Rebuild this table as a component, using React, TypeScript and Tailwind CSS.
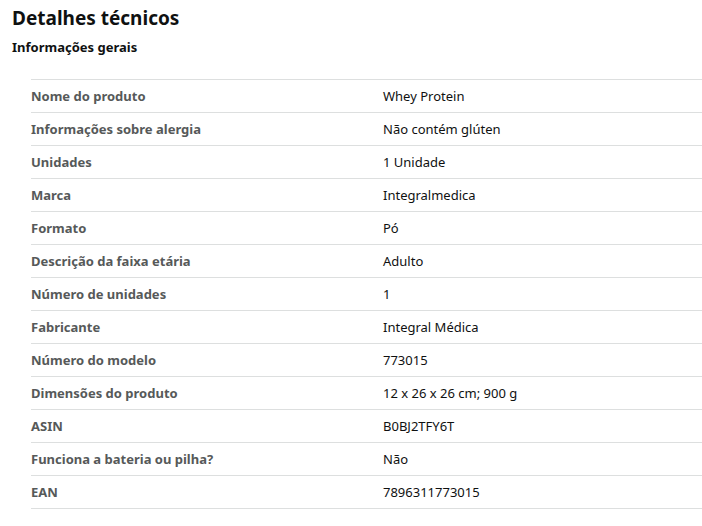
const rows: [string, string][] = [
  ["Nome do produto", "Whey Protein"],
  ["Informações sobre alergia", "Não contém glúten"],
  ["Unidades", "1 Unidade"],
  ["Marca", "Integralmedica"],
  ["Formato", "Pó"],
  ["Descrição da faixa etária", "Adulto"],
  ["Número de unidades", "1"],
  ["Fabricante", "Integral Médica"],
  ["Número do modelo", "773015"],
  ["Dimensões do produto", "12 x 26 x 26 cm; 900 g"],
  ["ASIN", "B0BJ2TFY6T"],
  ["Funciona a bateria ou pilha?", "Não"],
  ["EAN", "7896311773015"],
];

export default function App() {
  return (
    <div className="min-h-[526px] w-[702px] bg-white pl-3 pt-[6px] font-['Noto_Sans',sans-serif] text-[#0f1111]">
      <h2 className="text-[19px] font-bold leading-6">Detalhes técnicos</h2>
      <h3 className="mt-[9px] text-[13px] font-bold leading-4">Informações gerais</h3>
      <div className="ml-[19px] mt-[24px] border-t border-[#dddfdf]">
        {rows.map(([label, value]) => (
          <div key={label} className="flex h-[33px] items-center border-b border-[#dddfdf] pt-px text-[13px]">
            <div className="w-[352px] font-bold text-[#565959]">{label}</div>
            <div className="flex-1">{value}</div>
          </div>
        ))}
      </div>
    </div>
  );
}
